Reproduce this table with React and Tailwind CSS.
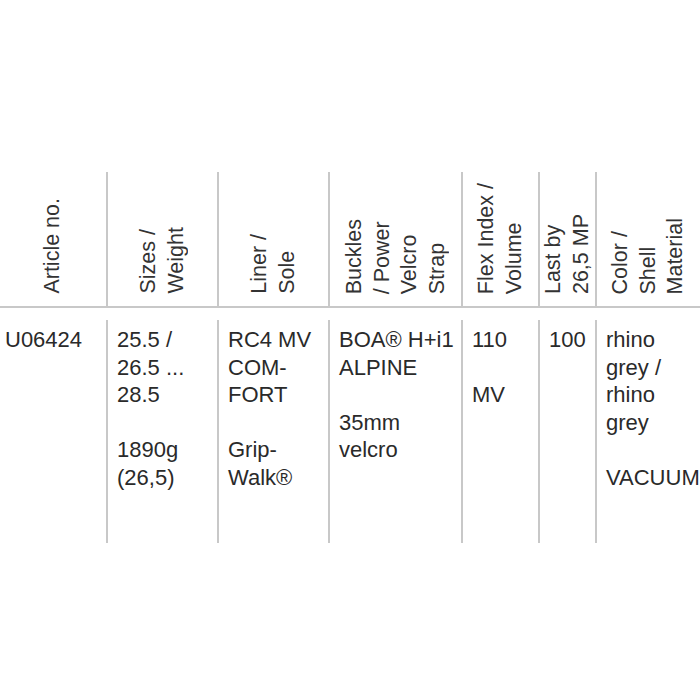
import React from "react";

const cols = [
  { w: "w-[106px]", head: ["Article no."], body: [["U06424"]] },
  { w: "w-[111px]", head: ["Sizes /", "Weight"], body: [["25.5 /", "26.5 ...", "28.5"], ["1890g", "(26,5)"]] },
  { w: "w-[111px]", head: ["Liner /", "Sole"], body: [["RC4 MV", "COM-", "FORT"], ["Grip-", "Walk®"]] },
  { w: "w-[133px]", head: ["Buckles", "/ Power", "Velcro", "Strap"], body: [["BOA® H+i1", "ALPINE"], ["35mm", "velcro"]] },
  { w: "w-[77px]", head: ["Flex Index /", "Volume"], body: [["110"], ["MV"]] },
  { w: "w-[57px]", head: ["Last by", "26,5 MP"], body: [["100"]] },
  { w: "flex-1", head: ["Color /", "Shell", "Material"], body: [["rhino", "grey /", "rhino", "grey"], ["VACUUM"]] },
];

export default function App() {
  return (
    <div
      className="w-[700px] h-[700px] bg-white text-[#2a2a2a] overflow-hidden"
      style={{ fontFamily: '"Liberation Sans", Arial, sans-serif' }}
    >
      <div className="h-[172px]" />
      {/* header row */}
      <div className="flex border-b-2 border-[#c8c8c8]">
        {cols.map((c, i) => (
          <div
            key={i}
            className={`${c.w} h-[134px] flex items-end justify-center pb-[12px] ${i > 0 ? "border-l-2 border-[#c8c8c8]" : ""}`}
          >
            <div className="[writing-mode:vertical-rl] rotate-180 text-[21.5px] leading-[27.5px] whitespace-nowrap text-[#333]">
              {c.head.map((h, j) => (
                <div key={j}>{h}</div>
              ))}
            </div>
          </div>
        ))}
      </div>
      {/* body row */}
      <div className="flex mt-[12px]">
        {cols.map((c, i) => (
          <div
            key={i}
            className={`${c.w} h-[223px] pt-[6px] text-[22px] leading-[27.5px] whitespace-nowrap ${i > 0 ? "border-l-2 border-[#c8c8c8] pl-[9px]" : "pl-[5px]"}`}
          >
            {c.body.map((p, j) => (
              <div key={j} className={j > 0 ? "mt-[27.5px]" : ""}>
                {p.map((l, k) => (
                  <div key={k}>{l}</div>
                ))}
              </div>
            ))}
          </div>
        ))}
      </div>
    </div>
  );
}
